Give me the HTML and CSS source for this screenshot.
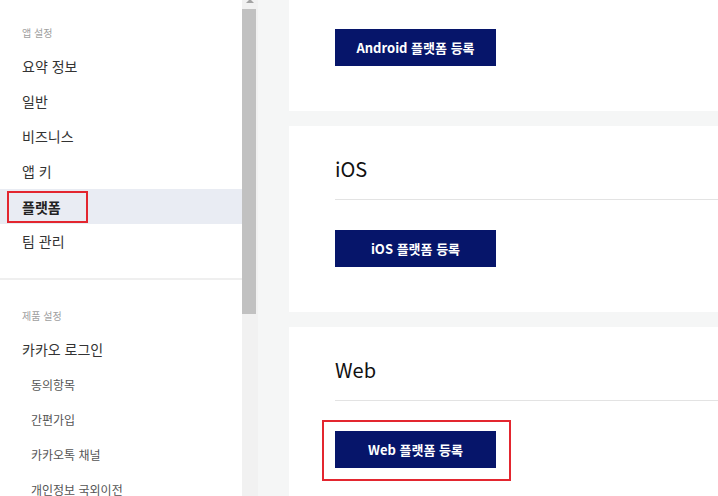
FILE: index.html
```html
<!DOCTYPE html>
<html lang="ko">
<head>
<meta charset="utf-8">
<title>플랫폼</title>
<link rel="stylesheet" href="styles.css">
</head>
<body>
<div class="page">
  <aside class="sidebar">
    <section class="nav-section first">
      <div class="nav-label">앱 설정</div>
      <ul class="nav-list">
        <li class="nav-item">요약 정보</li>
        <li class="nav-item">일반</li>
        <li class="nav-item">비즈니스</li>
        <li class="nav-item">앱 키</li>
        <li class="nav-item active"><span class="mark">플랫폼</span></li>
        <li class="nav-item">팀 관리</li>
      </ul>
    </section>
    <section class="nav-section second">
      <div class="nav-label">제품 설정</div>
      <ul class="nav-list">
        <li class="nav-item">카카오 로그인</li>
        <li class="nav-item sub">동의항목</li>
        <li class="nav-item sub">간편가입</li>
        <li class="nav-item sub">카카오톡 채널</li>
        <li class="nav-item sub">개인정보 국외이전</li>
      </ul>
    </section>
  </aside>
  <div class="scrollbar">
    <div class="arrow"></div>
    <div class="thumb"></div>
  </div>
  <main class="content">
    <div class="card top">
      <button class="btn">Android 플랫폼 등록</button>
    </div>
    <div class="card">
      <h2 class="card-title">iOS</h2>
      <button class="btn">iOS 플랫폼 등록</button>
    </div>
    <div class="card">
      <h2 class="card-title">Web</h2>
      <div class="highlight">
        <button class="btn">Web 플랫폼 등록</button>
      </div>
    </div>
  </main>
</div>
</body>
</html>
```

FILE: styles.css
```css
* { box-sizing: border-box; }
html, body {
  margin: 0;
  padding: 0;
  width: 718px;
  height: 496px;
  overflow: hidden;
  background: #f5f6f6;
  font-family: "Noto Sans CJK KR", "Noto Sans", sans-serif;
}
.page {
  display: flex;
  height: 496px;
}
.sidebar {
  width: 242px;
  flex: none;
  background: #fff;
  height: 496px;
}
.nav-section.first {
  padding-top: 26px;
  padding-bottom: 19px;
  border-bottom: 2px solid #efefef;
}
.nav-section.second {
  padding-top: 29px;
}
.nav-label {
  padding-left: 22px;
  font-size: 10px;
  line-height: 14px;
  color: #a0a0a0;
  margin-bottom: 9px;
}
.nav-list {
  list-style: none;
  margin: 0;
  padding: 0;
}
.nav-item {
  height: 35px;
  line-height: 35px;
  padding-left: 22px;
  font-size: 14px;
  color: #333;
  white-space: nowrap;
}
.nav-item.sub {
  padding-left: 31px;
  font-size: 12px;
  color: #555;
}
.nav-item.active {
  background: #e9ecf3;
  font-weight: 700;
  color: #222;
  display: flex;
  align-items: center;
}
.mark {
  display: inline-block;
  margin-left: -15px;
  padding: 0 13px;
  height: 32px;
  line-height: 28px;
  border: 2px solid #e3262f;
  width: 81px;
}
.scrollbar {
  width: 16px;
  flex: none;
  background: #f1f1f1;
  display: flex;
  flex-direction: column;
  align-items: center;
}
.arrow {
  width: 0;
  height: 0;
  border-left: 4px solid transparent;
  border-right: 4px solid transparent;
  border-bottom: 4px solid #a3a3a3;
  margin-top: -1px;
}
.thumb {
  width: 14px;
  margin-left: -2px;
  height: 305px;
  margin-top: 6px;
  background: #c1c1c1;
}
.content {
  flex: 1;
  padding-left: 31px;
  display: flex;
  flex-direction: column;
  gap: 15px;
}
.card {
  background: #fff;
  padding: 28px 0 45px 46px;
}
.card.top {
  padding-top: 29px;
}
.card-title {
  margin: 0 0 30px 0;
  font-size: 20px;
  line-height: 30px;
  font-weight: 400;
  color: #111;
  padding-bottom: 15px;
  border-bottom: 1px solid #e3e3e3;
}
.btn {
  display: block;
  width: 161px;
  height: 37px;
  border: 0;
  background: #06156a;
  color: #fff;
  font-family: "Noto Sans CJK KR", "Noto Sans", sans-serif;
  font-size: 13px;
  font-weight: 700;
  padding: 0;
}
.highlight {
  width: 189px;
  margin-left: -13px;
  margin-top: -11px;
  margin-bottom: -13px;
  padding: 9px 0 11px 11px;
  border: 2px solid #e3262f;
}
```
